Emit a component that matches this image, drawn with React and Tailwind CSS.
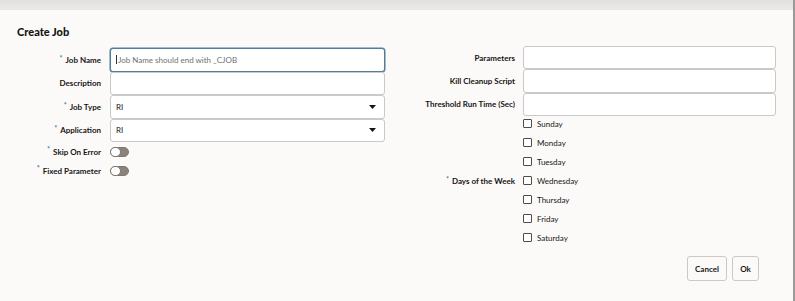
import React from "react";

const font = { fontFamily: "Lato, 'Noto Sans', sans-serif" };

function Req() {
  return <span className="text-[#2f7fb6] text-[7px] mr-[3px] relative -top-[2px]">*</span>;
}

function Label({ children, req }) {
  return (
    <div className="flex items-center justify-end text-[8px] font-bold text-[#161513] whitespace-nowrap">
      {req && <Req />}
      {children}
    </div>
  );
}

function Input({ focused, placeholder, value, select }) {
  return (
    <div
      className={
        "relative h-full bg-white rounded-[3px] border flex items-center px-[5px] text-[8px] " +
        (focused ? "border-[#4d7f9b] shadow-[0_0_0_0.5px_#4d7f9b]" : "border-[#cbc8c5]")
      }
    >
      {focused && <span className="w-px h-[9px] bg-[#333] mr-px" />}
      {placeholder && <span className="text-[#707070]">{placeholder}</span>}
      {value && <span className="text-[#161513]">{value}</span>}
      {select && (
        <svg className="absolute right-[8px] top-1/2 -translate-y-1/2" width="7" height="4" viewBox="0 0 7 4">
          <path d="M0 0 L7 0 L3.5 4 Z" fill="#161513" />
        </svg>
      )}
    </div>
  );
}

function Toggle() {
  return (
    <div className="w-[19px] h-[10px] rounded-full bg-[#8a827c] border border-[#7f7771] relative">
      <div className="absolute -left-px -top-px w-[11px] h-[10px] rounded-full bg-white border border-[#7f7771]" />
    </div>
  );
}

function Check({ label }) {
  return (
    <div className="h-[19px] flex items-center">
      <div className="w-[9px] h-[9px] border border-[#4f4b47] rounded-[1px] bg-white" />
      <span className="ml-[5px] text-[8px] text-[#161513]">{label}</span>
    </div>
  );
}

export default function App() {
  const days = ["Sunday", "Monday", "Tuesday", "Wednesday", "Thursday", "Friday", "Saturday"];
  return (
    <div className="w-[795px] h-[301px] bg-[#fcfaf9] relative overflow-hidden" style={font}>
      <div className="h-[10px] bg-gradient-to-b from-[#e2e0dd] to-[#ebe9e7]" />
      <div className="absolute right-0 top-0 w-[2px] h-full bg-[#9c9a98]" />
      <div className="pl-[17px] pt-[15px] h-[36px] text-[11px] leading-[14px] font-black text-[#161513]">Create Job</div>
      <div className="flex">
        <div className="w-[400px] pt-[2px]">
          <div className="grid grid-cols-[101px_275px] gap-x-[9px] auto-rows-[23.5px]">
            <Label req>Job Name</Label>
            <Input focused placeholder="Job Name should end with _CJOB" />
            <Label>Description</Label>
            <Input />
            <Label req>Job Type</Label>
            <Input value="RI" select />
            <Label req>Application</Label>
            <Input value="RI" select />
          </div>
          <div className="grid grid-cols-[101px_275px] gap-x-[9px] auto-rows-[19px]">
            <Label req>Skip On Error</Label>
            <div className="flex items-center"><Toggle /></div>
            <Label req>Fixed Parameter</Label>
            <div className="flex items-center"><Toggle /></div>
          </div>
        </div>
        <div className="w-[376px]">
          <div className="grid grid-cols-[115px_253px] gap-x-[8px] auto-rows-[23.3px]">
            <Label>Parameters</Label>
            <Input />
            <Label>Kill Cleanup Script</Label>
            <Input />
            <Label>Threshold Run Time (Sec)</Label>
            <Input />
          </div>
          <div className="grid grid-cols-[115px_253px] gap-x-[8px] -mt-[1.5px]">
            <Label req>Days of the Week</Label>
            <div>
              {days.map((d) => (
                <Check key={d} label={d} />
              ))}
            </div>
          </div>
          <div className="flex justify-end gap-[5px] pr-[17px] mt-[9px]">
            <button className="w-[40px] h-[25px] rounded-[3px] border border-[#cbc8c5] bg-[#fcfaf9] text-[8px] font-bold text-[#161513]">Cancel</button>
            <button className="w-[27px] h-[25px] rounded-[3px] border border-[#cbc8c5] bg-[#fcfaf9] text-[8px] font-bold text-[#161513]">Ok</button>
          </div>
        </div>
      </div>
    </div>
  );
}
